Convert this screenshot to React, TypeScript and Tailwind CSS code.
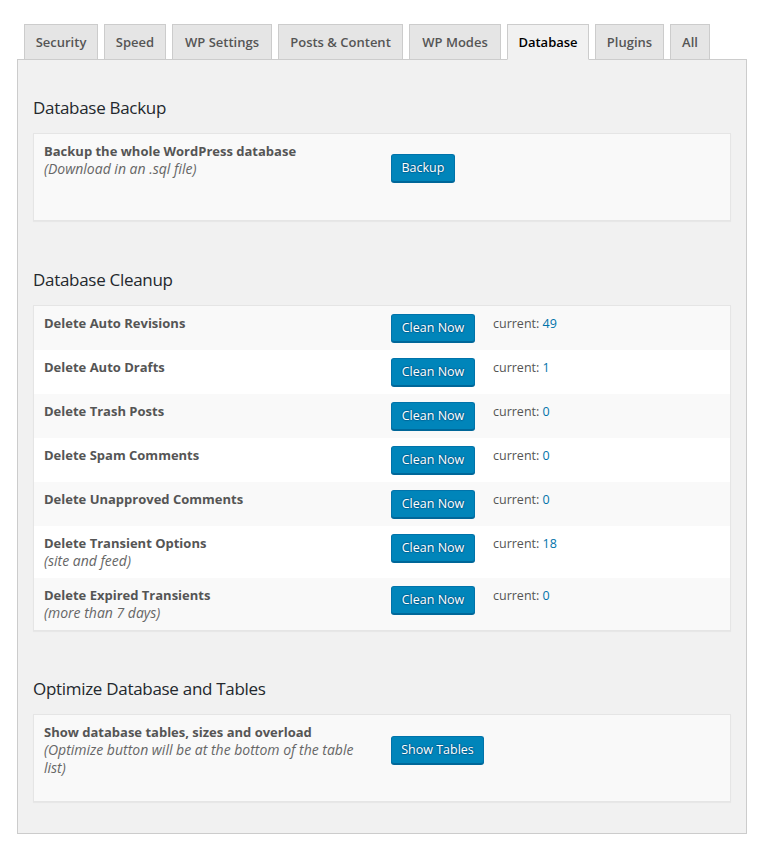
import React from "react";

const font = "font-['Open_Sans','Noto_Sans',sans-serif]";

const tabs = [
  { label: "Security", w: "w-[74px]" },
  { label: "Speed", w: "w-[62px]" },
  { label: "WP Settings", w: "w-[100px]" },
  { label: "Posts & Content", w: "w-[125px]" },
  { label: "WP Modes", w: "w-[92px]" },
  { label: "Database", w: "w-[82px]", active: true },
  { label: "Plugins", w: "w-[69px]" },
  { label: "All", w: "w-[40px]" },
];

function Btn({ children, w }: { children: React.ReactNode; w: string }) {
  return (
    <button
      className={`h-[28px] ${w} shrink-0 rounded-[3px] border border-[#0073aa] border-b-[#006799] bg-[#0085ba] text-[12.5px] leading-[26px] text-white shadow-[0_1px_0_#006799] [text-shadow:0_-1px_1px_#006799,1px_0_1px_#006799,0_1px_1px_#006799,-1px_0_1px_#006799]`}
    >
      {children}
    </button>
  );
}

const rows = [
  { t: "Delete Auto Revisions", n: "49" },
  { t: "Delete Auto Drafts", n: "1" },
  { t: "Delete Trash Posts", n: "0" },
  { t: "Delete Spam Comments", n: "0" },
  { t: "Delete Unapproved Comments", n: "0" },
  { t: "Delete Transient Options", s: "(site and feed)", n: "18" },
  { t: "Delete Expired Transients", s: "(more than 7 days)", n: "0" },
];

function Heading({ children, top }: { children: React.ReactNode; top: string }) {
  return (
    <h2 className={`${top} mb-[13px] text-[17px] leading-[24px] font-normal tracking-[-0.3px] text-[#23282d]`}>
      {children}
    </h2>
  );
}

function Label({ t, s }: { t: string; s?: string }) {
  return (
    <div className="w-[357px] shrink-0 pr-[27px] pl-[10px] leading-[18px]">
      <div className="text-[13px] font-bold text-[#555]">{t}</div>
      {s && <div className="text-[14px] italic text-[#666]">{s}</div>}
    </div>
  );
}

export default function App() {
  return (
    <div className={`${font} min-h-[853px] w-[763px] bg-white pt-[24px] text-[13px]`}>
      <div className="ml-[17px] w-[730px]">
        <div className="relative z-10 flex h-[35px] items-start gap-[6px] pl-[7px]">
          {tabs.map((t) => (
            <div
              key={t.label}
              className={`${t.w} flex shrink-0 items-start justify-center border border-[#ccc] pt-[5px] text-[13px] leading-[24px] font-semibold whitespace-nowrap ${
                t.active
                  ? "h-[36px] border-b-[#f1f1f1] bg-[#f1f1f1] text-black"
                  : "h-[35px] border-b-0 bg-[#e5e5e5] text-[#555]"
              }`}
            >
              {t.label}
            </div>
          ))}
        </div>
        <div className="border border-[#ccc] bg-[#f1f1f1] px-[15px] pb-[31px]">
          <Heading top="mt-[36px]">Database Backup</Heading>
          <div className="flex h-[88px] items-start border border-[#e5e5e5] bg-[#f9f9f9] py-[8px] shadow-[0_1px_1px_rgba(0,0,0,0.04)]">
            <Label t="Backup the whole WordPress database" s="(Download in an .sql file)" />
            <div className="mt-[12px]">
              <Btn w="w-[64px]">Backup</Btn>
            </div>
          </div>

          <Heading top="mt-[47px]">Database Cleanup</Heading>
          <div className="border border-[#e5e5e5] bg-[#f9f9f9] shadow-[0_1px_1px_rgba(0,0,0,0.04)]">
            {rows.map((r, i) => (
              <div
                key={r.t}
                className={`flex items-start py-[8px] leading-[18px] ${i % 2 === 0 ? "bg-[#f9f9f9]" : "bg-white"}`}
              >
                <Label t={r.t} s={r.s} />
                <Btn w="w-[84px]">Clean Now</Btn>
                <div className="mt-px ml-[18px] text-[12.5px] text-[#555]">
                  current: <span className="text-[#0073aa]">{r.n}</span>
                </div>
              </div>
            ))}
          </div>

          <Heading top="mt-[46px]">Optimize Database and Tables</Heading>
          <div className="flex h-[88px] items-start border border-[#e5e5e5] bg-[#f9f9f9] py-[8px] shadow-[0_1px_1px_rgba(0,0,0,0.04)]">
            <Label t="Show database tables, sizes and overload" s="(Optimize button will be at the bottom of the table list)" />
            <div className="mt-[13px]">
              <Btn w="w-[93px]">Show Tables</Btn>
            </div>
          </div>
        </div>
      </div>
    </div>
  );
}
